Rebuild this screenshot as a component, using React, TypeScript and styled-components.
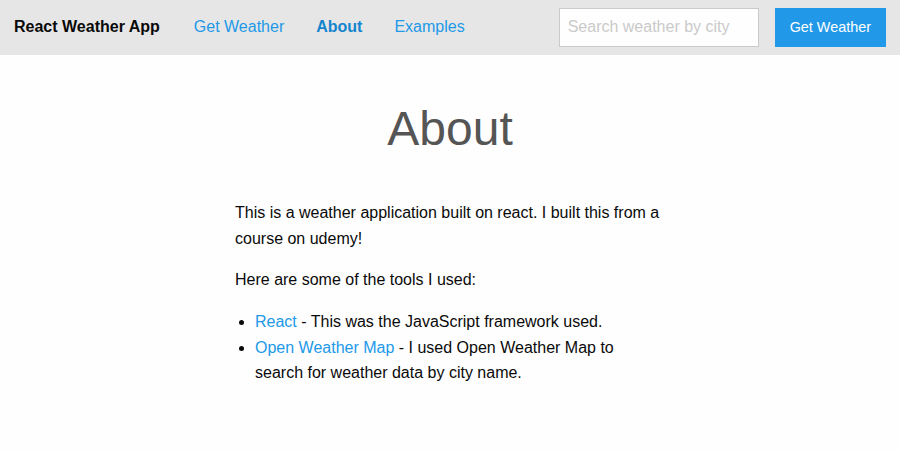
import React from "react";
import styled, { createGlobalStyle } from "styled-components";

const Global = createGlobalStyle`
  html, body { margin: 0; padding: 0; }
  body {
    background: #fefefe;
    color: #0a0a0a;
    font-family: "Liberation Sans", Arial, sans-serif;
    font-size: 16px;
    line-height: 1.5;
    -webkit-font-smoothing: antialiased;
  }
  * { box-sizing: border-box; }
`;

const TopBar = styled.header`
  display: flex;
  align-items: center;
  justify-content: space-between;
  height: 55px;
  padding: 0 14px 1px 14px;
  background: #e6e6e6;
`;

const Side = styled.nav`
  display: flex;
  align-items: center;
`;

const AppTitle = styled.span`
  font-weight: bold;
  font-size: 16px;
  color: #0a0a0a;
  padding-right: 18px;
`;

const NavLink = styled.a<{ $active?: boolean }>`
  padding: 0 16px;
  font-size: 16px;
  text-decoration: none;
  color: ${(p) => (p.$active ? "#1585cf" : "#2199e8")};
  font-weight: ${(p) => (p.$active ? "bold" : "normal")};
  cursor: pointer;
`;

const SearchInput = styled.input`
  width: 200px;
  height: 39px;
  padding: 8px;
  margin-right: 16px;
  border: 1px solid #cacaca;
  background: #fefefe;
  font-family: inherit;
  font-size: 16px;
  color: #0a0a0a;
  outline: none;
  &::placeholder { color: #cacaca; }
`;

const Button = styled.button`
  height: 39px;
  padding: 0 15px;
  border: none;
  background: #2199e8;
  color: #fefefe;
  font-family: inherit;
  font-size: 14.4px;
  white-space: nowrap;
  cursor: pointer;
`;

const Main = styled.main`
  display: flex;
  flex-direction: column;
  align-items: center;
`;

const PageTitle = styled.h1`
  margin: 40px 0 38px;
  font-size: 48px;
  font-weight: normal;
  line-height: 1.4;
  color: #555;
  text-align: center;
`;

const Column = styled.section`
  width: 430px;
`;

const Para = styled.p`
  margin: 0 0 16px;
  line-height: 1.6;
`;

const List = styled.ul`
  margin: 0 0 16px 20px;
  padding: 0;
  line-height: 1.6;
`;

const Link = styled.a`
  color: #2199e8;
  text-decoration: none;
`;

const ListItem = styled.li`
  padding-right: 40px;
`;

export default function App() {
  return (
    <>
      <Global />
      <TopBar>
        <Side>
          <AppTitle>React Weather App</AppTitle>
          <NavLink>Get Weather</NavLink>
          <NavLink $active>About</NavLink>
          <NavLink>Examples</NavLink>
        </Side>
        <Side>
          <SearchInput placeholder="Search weather by city" />
          <Button>Get Weather</Button>
        </Side>
      </TopBar>
      <Main>
        <PageTitle>About</PageTitle>
        <Column>
          <Para>
            This is a weather application built on react. I built this from a
            course on udemy!
          </Para>
          <Para>Here are some of the tools I used:</Para>
          <List>
            <ListItem>
              <Link>React</Link> - This was the JavaScript framework used.
            </ListItem>
            <ListItem>
              <Link>Open Weather Map</Link> - I used Open Weather Map to search
              for weather data by city name.
            </ListItem>
          </List>
        </Column>
      </Main>
    </>
  );
}
